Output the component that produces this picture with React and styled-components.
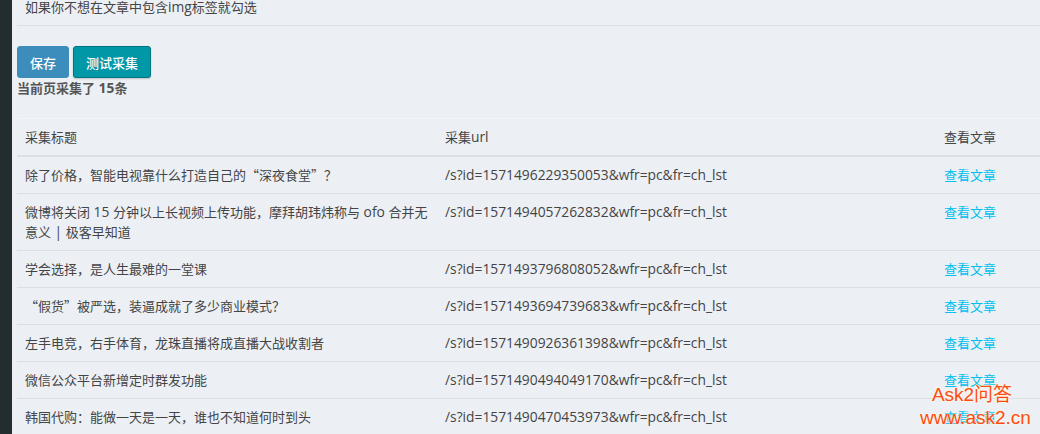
import React from "react";
import styled, { createGlobalStyle } from "styled-components";

const GlobalStyle = createGlobalStyle`
  html, body {
    margin: 0;
    height: 100%;
    overflow: hidden;
  }
  body {
    font-family: "Noto Sans CJK SC", "Open Sans", sans-serif;
    font-size: 13px;
    color: #444;
  }
`;

const Page = styled.div`
  position: relative;
  display: flex;
  width: 1040px;
  height: 434px;
  overflow: hidden;
  background-color: #ecf0f5;
`;

const Sidebar = styled.div`
  flex: 0 0 12px;
  background-color: #222d32;
`;

const Main = styled.div`
  flex: 1;
  min-width: 0;
  padding-left: 5px;
`;

const Hint = styled.div`
  height: 25px;
  line-height: 14px;
  padding-left: 8px;
  border-bottom: 1px solid #dde0e4;
`;

// latin runs are a touch larger than the CJK around them
const Latin = styled.span`
  font-family: "Open Sans", sans-serif;
  font-size: 13.8px;
`;

const Actions = styled.div`
  display: flex;
  gap: 4px;
  margin-top: 20px;
`;

const Btn = styled.button`
  height: 32px;
  width: ${(props) => props.$width}px;
  padding: 0;
  border-radius: 3px;
  border: 1px solid ${(props) => props.$border};
  background-color: ${(props) => props.$color};
  color: #fff;
  font-family: inherit;
  font-size: 13px;
  font-weight: 500;
  box-shadow: ${(props) => (props.$shadow ? "0 1px 2px rgba(0,0,0,.2)" : "none")};
`;

const Count = styled.div`
  font-weight: 700;
  line-height: 20px;
  margin-bottom: 20px;
  color: #555;
`;

const Table = styled.table`
  width: 1023px;
  table-layout: fixed;
  border-collapse: collapse;
  border-top: 1px solid #f2f4f7;
`;

const Head = styled.th`
  height: 36px;
  padding: 0 8px;
  text-align: left;
  font-weight: 400;
  line-height: 20px;
  border-bottom: 2px solid #dcdfe3;
  width: ${(props) => props.$width};
`;

const Row = styled.tr`
  border-bottom: 1px solid #dcdfe3;
`;

const Cell = styled.td`
  padding: 8px;
  line-height: 20px;
  vertical-align: top;
`;

const UrlCell = styled(Cell)`
  font-family: "Open Sans", sans-serif;
  font-size: 13.8px;
`;

const ArticleLink = styled.a`
  color: #00c0ef;
  text-decoration: none;
`;

const Watermark = styled.div`
  position: absolute;
  right: 10px;
  bottom: 5px;
  width: 110px;
  text-align: center;
  color: #ff4a14;
  font-family: "Liberation Sans", "Noto Sans CJK SC", sans-serif;
  font-size: 19px;
  line-height: 23px;
  text-shadow: 0 0 2px #fffbe0, 0 0 3px #fffbe0;
`;

const WatermarkLine = styled.div`
  padding-right: ${(props) => props.$shift || 0}px;
  white-space: nowrap;
`;

// full-width punctuation, written as escapes so it can't get normalised
const C = "\uFF0C";
const Q = "\uFF1F";
const K = "\uFF1A";

const rows = [
  ["1571496229350053", `除了价格${C}智能电视靠什么打造自己的“深夜食堂”${Q}`],
  ["1571494057262832", <>微博将关闭<Latin> 15 </Latin>分钟以上长视频上传功能{C}摩拜胡玮炜称与<Latin> ofo </Latin>合并无意义<Latin> | </Latin>极客早知道</>],
  ["1571493796808052", `学会选择${C}是人生最难的一堂课`],
  ["1571493694739683", `“假货”被严选${C}装逼成就了多少商业模式${Q}`],
  ["1571490926361398", `左手电竞${C}右手体育${C}龙珠直播将成直播大战收割者`],
  ["1571490494049170", "微信公众平台新增定时群发功能"],
  ["1571490470453973", `韩国代购${K}能做一天是一天${C}谁也不知道何时到头`],
];

export default function App() {
  return (
    <Page lang="zh-CN">
      <GlobalStyle />
      <Sidebar />
      <Main>
        <Hint>如果你不想在文章中包含<Latin>img</Latin>标签就勾选</Hint>
        <Actions>
          <Btn $width={52} $color="#3c8dbc" $border="#3c8dbc">保存</Btn>
          <Btn $width={78} $color="#0097a7" $border="#00737f" $shadow>测试采集</Btn>
        </Actions>
        <Count>当前页采集了<Latin> 15</Latin>条</Count>
        <Table>
          <thead>
            <tr>
              <Head $width="404px">采集标题</Head>
              <Head $width="483px">采集<Latin>url</Latin></Head>
              <Head>查看文章</Head>
            </tr>
          </thead>
          <tbody>
            {rows.map(([id, title]) => (
              <Row key={id}>
                <Cell>{title}</Cell>
                <UrlCell>/s?id={id}&amp;wfr=pc&amp;fr=ch_lst</UrlCell>
                <Cell><ArticleLink href="#">查看文章</ArticleLink></Cell>
              </Row>
            ))}
          </tbody>
        </Table>
      </Main>
      <Watermark>
        <WatermarkLine $shift={6}>Ask2问答</WatermarkLine>
        <WatermarkLine>www.ask2.cn</WatermarkLine>
      </Watermark>
    </Page>
  );
}
